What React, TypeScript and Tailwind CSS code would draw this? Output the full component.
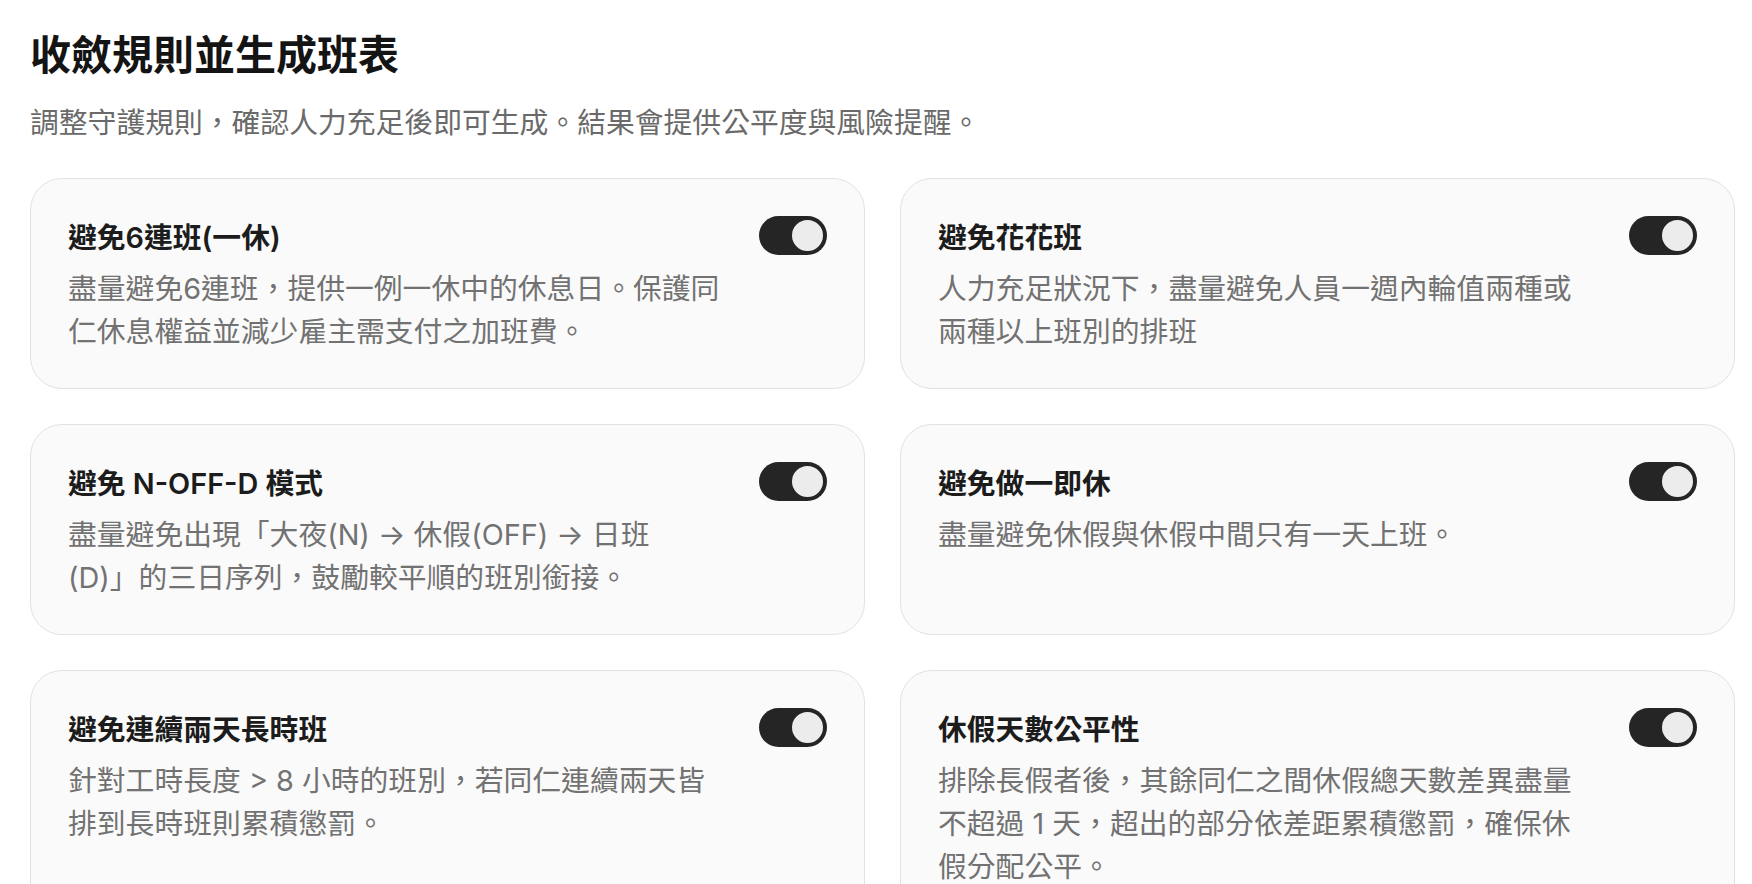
import { useState } from "react";

type Rule = {
    id: string;
    title: string;
    description: string;
};

const rules: Rule[] = [
    {
        id: "no_six_days",
        title: "避免6連班(一休)",
        description: "盡量避免6連班，提供一例一休中的休息日。保護同仁休息權益並減少雇主需支付之加班費。",
    },
    {
        id: "no_mixed",
        title: "避免花花班",
        description: "人力充足狀況下，盡量避免人員一週內輪值兩種或兩種以上班別的排班",
    },
    {
        id: "no_n_off_d",
        title: "避免 N-OFF-D 模式",
        description: "盡量避免出現「大夜(N) → 休假(OFF) → 日班\u200B(D)」的三日序列，鼓勵較平順的班別銜接。",
    },
    {
        id: "no_single_work",
        title: "避免做一即休",
        description: "盡量避免休假與休假中間只有一天上班。",
    },
    {
        id: "no_long_twice",
        title: "避免連續兩天長時班",
        description: "針對工時長度 > 8 小時的班別，若同仁連續兩天皆排到長時班則累積懲罰。",
    },
    {
        id: "fair_off_days",
        title: "休假天數公平性",
        description: "排除長假者後，其餘同仁之間休假總天數差異盡量不超過 1 天，超出的部分依差距累積懲罰，確保休假分配公平。",
    },
];

function Toggle({ checked, onChange }: { checked: boolean; onChange: (v: boolean) => void }) {
    return (
        <button
            type="button"
            role="switch"
            aria-checked={checked}
            onClick={() => onChange(!checked)}
            className={`flex h-[39px] w-[68px] shrink-0 items-center rounded-full p-[2px] ${
                checked ? "justify-end bg-[#252525]" : "justify-start bg-[#d4d4d4]"
            }`}
        >
            <span className="h-[35px] w-[35px] rounded-full border-[2px] border-[#252525] bg-[#ececec]" />
        </button>
    );
}

function RuleCard({ rule, enabled, onToggle }: { rule: Rule; enabled: boolean; onToggle: (v: boolean) => void }) {
    return (
        <div className="rounded-[32px] border-[1.5px] border-[#e2e2e2] bg-[#fafafa] px-[37px] pt-[37px] pb-[35px]">
            <div className="flex items-start gap-[36px]">
                <div className="min-w-0 flex-1">
                    <h3 className="text-[28.8px] font-semibold leading-[43px] text-[#1c1c1c]">{rule.title}</h3>
                    {/* manual break point before (D) so the N-OFF-D text wraps like the design */}
                    <p className="mt-[8px] text-[28.8px] leading-[43px] text-[#727272]">
                        {rule.description.split("\u200B").map((part, i, arr) => (
                            <span key={i}>
                                {part}
                                {i < arr.length - 1 && <br />}
                            </span>
                        ))}
                    </p>
                </div>
                <Toggle checked={enabled} onChange={onToggle} />
            </div>
        </div>
    );
}

export default function App() {
    const [enabled, setEnabled] = useState<Record<string, boolean>>(
        Object.fromEntries(rules.map(r => [r.id, true]))
    );

    return (
        <div
            className="min-h-screen bg-white pl-[30px] pr-[17px] pt-[30px]"
            style={{ fontFamily: 'Inter, "Noto Sans CJK TC", "Noto Sans", sans-serif' }}
        >
            <h1 className="text-[41px] font-bold leading-[51px] text-[#141414]">收斂規則並生成班表</h1>
            <p className="mt-[20px] text-[28.8px] leading-[43px] text-[#6a6a6a]">
                調整守護規則，確認人力充足後即可生成。結果會提供公平度與風險提醒。
            </p>

            <div className="mt-[34px] grid grid-cols-2 gap-x-[35px] gap-y-[35px]">
                {rules.map(rule => (
                    <RuleCard
                        key={rule.id}
                        rule={rule}
                        enabled={enabled[rule.id]}
                        onToggle={v => setEnabled(prev => ({ ...prev, [rule.id]: v }))}
                    />
                ))}
            </div>
        </div>
    );
}
